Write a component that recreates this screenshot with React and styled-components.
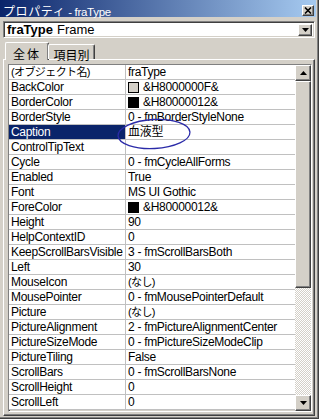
import React from "react";
import styled, { createGlobalStyle } from "styled-components";

const GlobalStyle = createGlobalStyle`
  html, body { margin: 0; padding: 0; background: #d4d0c8; }
  body {
    font-family: "Liberation Sans", "Noto Sans CJK JP", sans-serif;
    font-size: 12px;
  }
`;

const raised = `
  border-style: solid;
  border-width: 1px;
  border-color: #fff #404040 #404040 #fff;
  box-shadow: inset -1px -1px #808080;
`;

const sunken = `
  border-style: solid;
  border-width: 1px;
  border-color: #808080 #fff #fff #808080;
  box-shadow: inset 1px 1px #404040, inset -1px -1px #d4d0c8;
`;

const Window = styled.div`
  position: relative;
  width: 319px;
  height: 419px;
  box-sizing: border-box;
  padding: 0 3px 3px 0;
  background: #d4d0c8;
  box-shadow: inset -1px -1px #404040, inset -2px -2px #808080;
  display: flex;
  flex-direction: column;
  overflow: hidden;
`;

const TitleBar = styled.div`
  flex: none;
  height: 17px;
  box-sizing: border-box;
  padding: 3px 2px 0 3px;
  background: linear-gradient(to right, #0a246a, #a6caf0);
  color: #fff;
  display: flex;
  align-items: center;
  justify-content: space-between;
  white-space: nowrap;
`;

const TitleKana = styled.span`
  font-size: 12px;
  letter-spacing: 0.6px;
`;

const TitleName = styled.span`
  font-size: 11.5px;
  letter-spacing: -0.3px;
`;

const CloseBtn = styled.div`
  width: 12px;
  height: 11px;
  box-sizing: border-box;
  background: #d4d0c8;
  ${raised}
  display: flex;
  align-items: center;
  justify-content: center;
`;

const Content = styled.div`
  flex: 1;
  display: flex;
  flex-direction: column;
  padding: 4px 1px 0 3px;
  min-height: 0;
`;

const Combo = styled.div`
  flex: none;
  height: 17px;
  box-sizing: border-box;
  background: #fff;
  ${sunken}
  display: flex;
  align-items: center;
  padding: 0 2px 0 3px;
  font-size: 13px;
`;

const ComboText = styled.div`
  flex: 1;
  b { font-weight: bold; margin-right: 4px; }
`;

const ArrowBtn = styled.div`
  flex: none;
  width: ${p => p.w || 15}px;
  height: ${p => p.h || 13}px;
  box-sizing: border-box;
  background: #d4d0c8;
  ${raised}
  display: flex;
  align-items: center;
  justify-content: center;
`;

const TabRow = styled.div`
  flex: none;
  height: 21px;
  display: flex;
  align-items: flex-end;
  padding-left: 2px;
  position: relative;
  z-index: 1;
`;

const Tab = styled.div`
  box-sizing: border-box;
  height: ${p => (p.active ? 18 : 15)}px;
  width: ${p => p.w}px;
  margin-bottom: ${p => (p.active ? -1 : 0)}px;
  margin-left: ${p => (p.active ? 0 : -1)}px;
  padding-top: ${p => (p.active ? 2 : 1)}px;
  background: #d4d0c8;
  border-left: 1px solid #fff;
  border-top: 1px solid #fff;
  border-right: 1px solid #404040;
  border-radius: 2px 2px 0 0;
  box-shadow: inset -1px 0 #808080;
  text-align: center;
  font-size: 12px;
  letter-spacing: ${p => (p.active ? 2 : 0)}px;
`;

const Panel = styled.div`
  flex: 1;
  min-height: 0;
  box-sizing: border-box;
  ${raised}
  box-shadow: inset -1px -1px #808080, inset 1px 1px #d4d0c8;
  padding: 4px 2px 3px 4px;
  display: flex;
`;

const Grid = styled.div`
  flex: 1;
  box-sizing: border-box;
  ${sunken}
  display: flex;
  overflow: hidden;
  background: #fff;
`;

const Table = styled.div`
  flex: 1;
  display: grid;
  grid-template-columns: 117px 1fr;
  grid-auto-rows: 15px;
  align-content: start;
  overflow: hidden;
  letter-spacing: -0.3px;
`;

const Cell = styled.div`
  box-sizing: border-box;
  border-bottom: 1px solid #c0c0c0;
  border-right: ${p => (p.name ? "1px solid #c0c0c0" : "none")};
  padding-left: 2px;
  line-height: 14px;
  white-space: nowrap;
  overflow: hidden;
  display: flex;
  align-items: center;
  background: ${p => (p.selected ? "#0a246a" : "#fff")};
  color: ${p => (p.selected ? "#fff" : "#000")};
`;

const Kana = styled.span`
  font-size: 11px;
  letter-spacing: -0.6px;
`;

const Swatch = styled.span`
  flex: none;
  width: 11px;
  height: 11px;
  box-sizing: border-box;
  border: 1px solid #000;
  background: ${p => p.color};
  margin-right: 4px;
`;

const ScrollBar = styled.div`
  flex: none;
  width: 16px;
  display: flex;
  flex-direction: column;
`;

const Thumb = styled.div`
  flex: none;
  height: 207px;
  box-sizing: border-box;
  background: #d4d0c8;
  ${raised}
`;

const Track = styled.div`
  flex: 1;
  background: repeating-conic-gradient(#fff 0 25%, #d4d0c8 0 50%) 0 0 / 2px 2px;
`;

const Annotation = styled.svg`
  position: absolute;
  left: 114px;
  top: 115px;
  pointer-events: none;
`;

const rows = [
  [<Kana>(オブジェクト名)</Kana>, "fraType"],
  ["BackColor", "&H8000000F&", "#d4d0c8"],
  ["BorderColor", "&H80000012&", "#000"],
  ["BorderStyle", "0 - fmBorderStyleNone"],
  ["Caption", "血液型"],
  ["ControlTipText", ""],
  ["Cycle", "0 - fmCycleAllForms"],
  ["Enabled", "True"],
  ["Font", "MS UI Gothic"],
  ["ForeColor", "&H80000012&", "#000"],
  ["Height", "90"],
  ["HelpContextID", "0"],
  ["KeepScrollBarsVisible", "3 - fmScrollBarsBoth"],
  ["Left", "30"],
  ["MouseIcon", <Kana>(なし)</Kana>],
  ["MousePointer", "0 - fmMousePointerDefault"],
  ["Picture", <Kana>(なし)</Kana>],
  ["PictureAlignment", "2 - fmPictureAlignmentCenter"],
  ["PictureSizeMode", "0 - fmPictureSizeModeClip"],
  ["PictureTiling", "False"],
  ["ScrollBars", "0 - fmScrollBarsNone"],
  ["ScrollHeight", "0"],
  ["ScrollLeft", "0"],
];

const Arrow = ({ up }) => (
  <svg width="7" height="4" viewBox="0 0 7 4">
    <polygon points={up ? "3.5,0 7,4 0,4" : "0,0 7,0 3.5,4"} fill="#000" />
  </svg>
);

class App extends React.Component {
  render() {
    return (
      <Window>
        <GlobalStyle />
        <TitleBar>
          <span>
            <TitleKana>プロパティ</TitleKana>
            <TitleName> - fraType</TitleName>
          </span>
          <CloseBtn>
            <svg width="8" height="7" viewBox="0 0 8 7">
              <path d="M1 0.5 L7 6.5 M7 0.5 L1 6.5" stroke="#000" strokeWidth="1.6" />
            </svg>
          </CloseBtn>
        </TitleBar>
        <Content>
          <Combo>
            <ComboText>
              <b>fraType</b>Frame
            </ComboText>
            <ArrowBtn w={14} h={12}>
              <Arrow />
            </ArrowBtn>
          </Combo>
          <TabRow>
            <Tab active w={44}>全体</Tab>
            <Tab w={47}>項目別</Tab>
          </TabRow>
          <Panel>
            <Grid>
              <Table>
                {rows.map(([name, value, color], i) => (
                  <React.Fragment key={i}>
                    <Cell name="1" selected={name === "Caption"}>{name}</Cell>
                    <Cell>
                      {color && <Swatch color={color} />}
                      {value}
                    </Cell>
                  </React.Fragment>
                ))}
              </Table>
              <ScrollBar>
                <ArrowBtn w={16} h={16}>
                  <Arrow up />
                </ArrowBtn>
                <Thumb />
                <Track />
                <ArrowBtn w={16} h={16}>
                  <Arrow />
                </ArrowBtn>
              </ScrollBar>
            </Grid>
          </Panel>
        </Content>
        <Annotation width="80" height="38" viewBox="0 0 80 38">
          <ellipse cx="40" cy="19" rx="36" ry="14.5" fill="none" stroke="#2a2aa8" strokeWidth="1.3" transform="rotate(-3 40 19)" />
        </Annotation>
      </Window>
    );
  }
}

export default App;
